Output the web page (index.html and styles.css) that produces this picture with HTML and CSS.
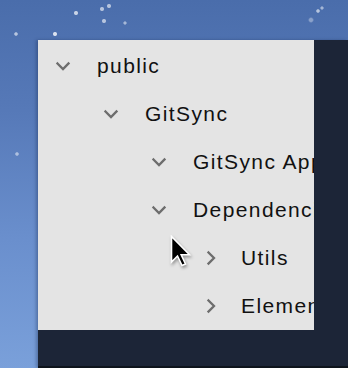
FILE: index.html
```html
<!DOCTYPE html>
<html>
<head>
<meta charset="utf-8">
<link rel="stylesheet" href="styles.css">
</head>
<body>
<div class="window">
  <div class="panel">
    <div class="row lvl0"><span class="chev"><svg viewBox="0 0 24 24"><path d="M6.5 9.5 L12 15 L17.5 9.5"/></svg></span><span class="label">public</span></div>
    <div class="row lvl1"><span class="chev"><svg viewBox="0 0 24 24"><path d="M6.5 9.5 L12 15 L17.5 9.5"/></svg></span><span class="label">GitSync</span></div>
    <div class="row lvl2"><span class="chev"><svg viewBox="0 0 24 24"><path d="M6.5 9.5 L12 15 L17.5 9.5"/></svg></span><span class="label">GitSync App</span></div>
    <div class="row lvl2"><span class="chev"><svg viewBox="0 0 24 24"><path d="M6.5 9.5 L12 15 L17.5 9.5"/></svg></span><span class="label">Dependencies</span></div>
    <div class="row lvl3"><span class="chev"><svg viewBox="0 0 24 24"><path d="M13.5 6.5 L19 12 L13.5 17.5"/></svg></span><span class="label">Utils</span></div>
    <div class="row lvl3"><span class="chev"><svg viewBox="0 0 24 24"><path d="M13.5 6.5 L19 12 L13.5 17.5"/></svg></span><span class="label">Elements</span></div>
  </div>
</div>
<svg class="cursor" width="26" height="36" viewBox="0 0 26 36">
  <polygon points="1.5,1.5 1.5,27 7.5,21 12,30.5 15.5,29 11.2,19.8 19.5,19.8" />
</svg>
</body>
</html>
```

FILE: styles.css
```css
html, body {
  margin: 0;
  padding: 0;
}
body {
  width: 348px;
  height: 368px;
  overflow: hidden;
  position: relative;
  font-family: "Liberation Sans", Arial, sans-serif;
  background:
    radial-gradient(circle at 55px 34px, rgba(255,255,255,0.8) 0 1.5px, transparent 2.5px),
    radial-gradient(circle at 76px 13px, rgba(255,255,255,0.7) 0 1.5px, transparent 2.5px),
    radial-gradient(circle at 102px 9px, rgba(255,255,255,0.6) 0 1.5px, transparent 2.5px),
    radial-gradient(circle at 109px 6px, rgba(255,255,255,0.6) 0 1.5px, transparent 2.5px),
    radial-gradient(circle at 104px 21px, rgba(255,255,255,0.6) 0 1.5px, transparent 2.5px),
    radial-gradient(circle at 125px 23px, rgba(255,255,255,0.5) 0 1.2px, transparent 2px),
    radial-gradient(circle at 16px 34px, rgba(255,255,255,0.6) 0 1.3px, transparent 2.2px),
    radial-gradient(circle at 318px 11px, rgba(255,255,255,0.6) 0 1.3px, transparent 2.2px),
    radial-gradient(circle at 322px 8px, rgba(255,255,255,0.5) 0 1.2px, transparent 2px),
    radial-gradient(circle at 17px 154px, rgba(255,255,255,0.5) 0 1.3px, transparent 2.2px),
    radial-gradient(circle at 311px 20px, rgba(255,255,255,0.35) 0 1.5px, transparent 3px),
    linear-gradient(180deg, #4a6dab 0%, #5679b8 30%, #6a8fcd 65%, #7aa0da 100%);
}
.window {
  margin: 40px 0 0 38px;
  width: 310px;
  height: 326px;
  background: #1c2537;
  border-bottom: 2px solid #0e141c;
  box-shadow: -2px 0 3px rgba(20, 40, 80, 0.35);
}
.panel {
  width: 276px;
  height: 290px;
  background: #e4e4e4;
  overflow: hidden;
  padding-top: 2px;
  box-sizing: border-box;
}
.row {
  display: flex;
  align-items: center;
  height: 48px;
  white-space: nowrap;
}
.lvl0 { padding-left: 13px; }
.lvl1 { padding-left: 61px; }
.lvl2 { padding-left: 109px; }
.lvl3 { padding-left: 157px; }
.chev {
  flex: none;
  width: 24px;
  height: 24px;
  margin-right: 22px;
}
.chev svg {
  display: block;
  width: 24px;
  height: 24px;
  fill: none;
  stroke: #6d6d6d;
  stroke-width: 2.3;
  stroke-linecap: square;
  stroke-linejoin: miter;
}
.label {
  font-size: 21px;
  color: #111111;
  letter-spacing: 1.4px;
}
.cursor {
  position: absolute;
  left: 170px;
  top: 235px;
  filter: drop-shadow(1px 2px 1.5px rgba(0,0,0,0.35));
}
.cursor polygon {
  fill: #000;
  stroke: #fff;
  stroke-width: 1.6;
  stroke-linejoin: miter;
}
```
